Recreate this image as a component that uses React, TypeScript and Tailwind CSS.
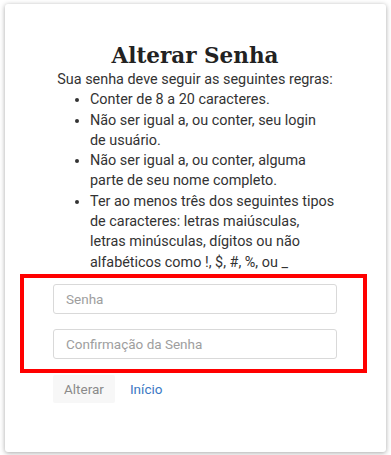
import React from 'react';

export default function App() {
  return (
    <div className="min-h-[455px] bg-white pt-[4px] px-[5px]" style={{ fontFamily: 'Roboto, "Noto Sans", sans-serif' }}>
      <div className="w-[381px] h-[448px] bg-white rounded-[3px] shadow-[0_1px_5px_rgba(0,0,0,0.35)] pt-[37px] pl-[48px] pr-[49px]">
        <h1
          className="text-center text-[21.5px] leading-[29px] font-bold text-[#222]"
          style={{ fontFamily: '"DejaVu Serif", "Liberation Serif", serif' }}
        >
          Alterar Senha
        </h1>
        <div className="text-[14.4px] leading-[20.3px] text-[#333]">
          <p className="text-center">Sua senha deve seguir as seguintes regras:</p>
          <ul className="list-disc pl-[37px]">
            <li>Conter de 8 a 20 caracteres.</li>
            <li className="pr-[8px]">Não ser igual a, ou conter, seu login de usuário.</li>
            <li>Não ser igual a, ou conter, alguma parte de seu nome completo.</li>
            <li>Ter ao menos três dos seguintes tipos de caracteres: letras maiúsculas, letras minúsculas, dígitos ou não alfabéticos como !, $, #, %, ou _</li>
          </ul>
        </div>
        <div className="mt-[1px] -ml-[33px] -mr-[30px] border-[4px] border-[#ff0000] pt-[6px] pb-[10px] pl-[29px] pr-[26px] flex flex-col gap-[15px]">
          <input
            type="password"
            placeholder="Senha"
            className="h-[30px] w-full rounded-[3px] border border-[#d9d9d9] px-[12px] text-[13.5px] text-[#333] placeholder:text-[#9e9e9e] outline-none"
          />
          <input
            type="password"
            placeholder="Confirmação da Senha"
            className="h-[30px] w-full rounded-[3px] border border-[#d9d9d9] px-[12px] text-[13.5px] text-[#333] placeholder:text-[#9e9e9e] outline-none"
          />
        </div>
        <div className="mt-[2px] flex items-center gap-[15px]">
          <button className="h-[28px] px-[11px] bg-[#f7f7f7] text-[#8a8a8a] text-[13.5px] rounded-[2px]">Alterar</button>
          <a href="#" className="text-[13.5px] text-[#3b78c4]">Início</a>
        </div>
      </div>
    </div>
  );
}
